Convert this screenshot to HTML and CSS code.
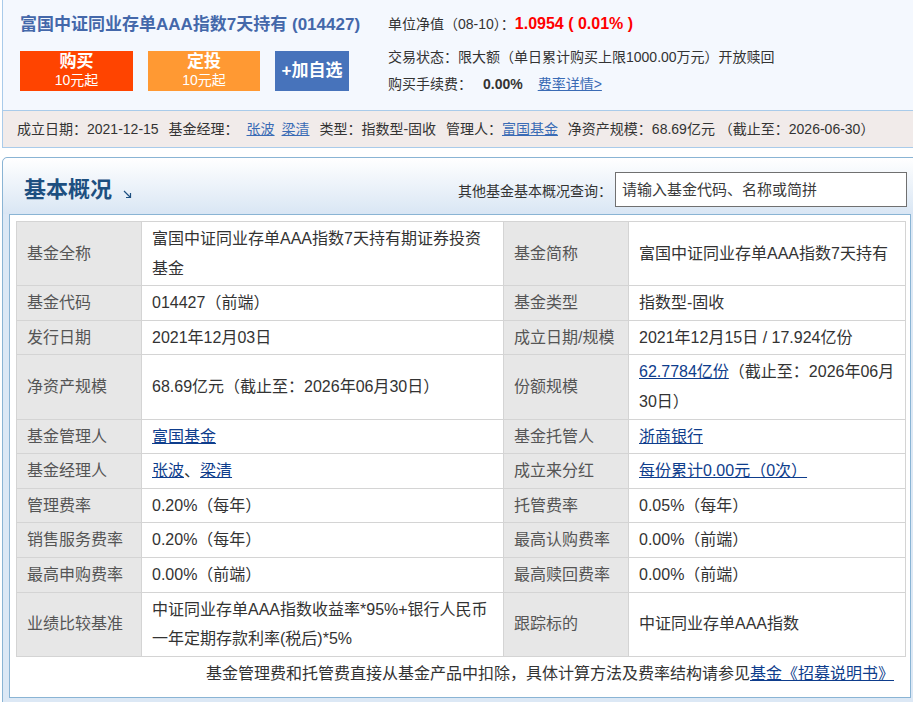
FILE: index.html
```html
<!DOCTYPE html>
<html lang="zh">
<head>
    <meta charset="UTF-8">
    <title>富国中证同业存单AAA指数7天持有 (014427) 基本概况</title>
    <link rel="stylesheet" href="styles.css">
</head>
<body>

<div class="fund-head">
    <div class="head-main">
        <div class="head-left">
            <div class="fund-name">富国中证同业存单AAA指数7天持有 (014427)</div>
            <div class="btns">
                <a class="btn buy" href="#"><b>购买</b><span>10元起</span></a>
                <a class="btn plan" href="#"><b>定投</b><span>10元起</span></a>
                <a class="btn fav" href="#"><b>+加自选</b></a>
            </div>
        </div>
        <div class="head-right">
            <p class="nav-line">单位净值（08-10）：<strong class="up">1.0954 ( 0.01% )</strong></p>
            <p>交易状态：限大额（单日累计购买上限1000.00万元）开放赎回</p>
            <p>购买手续费：<strong class="fee">0.00%</strong><a class="fee-link" href="#">费率详情&gt;</a></p>
        </div>
    </div>
    <div class="info-bar">
        <span>成立日期：2021-12-15</span>
        <span class="mgr">基金经理：<a href="#">张波</a><a href="#">梁清</a></span>
        <span>类型：指数型-固收</span>
        <span>管理人：<a href="#">富国基金</a></span>
        <span>净资产规模：68.69亿元 （截止至：2026-06-30）</span>
    </div>
</div>

<div class="box">
    <div class="box-hd">
        <h2>基本概况<svg class="arrow" width="9" height="9" viewBox="0 0 9 9"><path d="M1 1 L7.5 7.5 M7.5 3 V7.5 H3" fill="none" stroke="#1d4f80" stroke-width="1.2"/></svg></h2>
        <div class="search">其他基金基本概况查询：<input type="text" placeholder="请输入基金代码、名称或简拼"></div>
    </div>
    <div class="box-bd">
        <table class="info">
            <colgroup>
                <col style="width:125px">
                <col style="width:362px">
                <col style="width:125px">
                <col style="width:277px">
            </colgroup>
            <tr>
                <th>基金全称</th><td>富国中证同业存单AAA指数7天持有期证券投资基金</td>
                <th>基金简称</th><td>富国中证同业存单AAA指数7天持有</td>
            </tr>
            <tr>
                <th>基金代码</th><td>014427（前端）</td>
                <th>基金类型</th><td>指数型-固收</td>
            </tr>
            <tr>
                <th>发行日期</th><td>2021年12月03日</td>
                <th>成立日期/规模</th><td>2021年12月15日 / 17.924亿份</td>
            </tr>
            <tr>
                <th>净资产规模</th><td>68.69亿元（截止至：2026年06月30日）</td>
                <th>份额规模</th><td><a href="#">62.7784亿份</a>（截止至：2026年06月30日）</td>
            </tr>
            <tr>
                <th>基金管理人</th><td><a href="#">富国基金</a></td>
                <th>基金托管人</th><td><a href="#">浙商银行</a></td>
            </tr>
            <tr>
                <th>基金经理人</th><td><a href="#">张波</a>、<a href="#">梁清</a></td>
                <th>成立来分红</th><td><a href="#">每份累计0.00元（0次）</a></td>
            </tr>
            <tr>
                <th>管理费率</th><td>0.20%（每年）</td>
                <th>托管费率</th><td>0.05%（每年）</td>
            </tr>
            <tr>
                <th>销售服务费率</th><td>0.20%（每年）</td>
                <th>最高认购费率</th><td>0.00%（前端）</td>
            </tr>
            <tr>
                <th>最高申购费率</th><td>0.00%（前端）</td>
                <th>最高赎回费率</th><td>0.00%（前端）</td>
            </tr>
            <tr>
                <th>业绩比较基准</th><td>中证同业存单AAA指数收益率*95%+银行人民币一年定期存款利率(税后)*5%</td>
                <th>跟踪标的</th><td>中证同业存单AAA指数</td>
            </tr>
        </table>
        <p class="note">基金管理费和托管费直接从基金产品中扣除，具体计算方法及费率结构请参见<a href="#">基金《招募说明书》</a></p>
    </div>
</div>

</body>
</html>
```

FILE: styles.css
```css
html, body { overflow: hidden; }
body { margin: 0; font-family: "Liberation Sans", "Noto Sans CJK SC", sans-serif; color: #333; background: #fff; }
a { color: #0e3d8c; }

.fund-head { margin-left: 2px; width: 930px; border-left: 1px solid #a9cbea; border-bottom: 1px solid #a9cbea; }
.head-main { display: flex; height: 111px; box-sizing: border-box; background: #f4f8fe; border-bottom: 1px solid #a9cbea; }
.head-left { flex: none; width: 385px; padding: 15px 0 0 17px; box-sizing: border-box; }
.fund-name { font-size: 17px; line-height: 20px; font-weight: bold; color: #4468aa; white-space: nowrap; }
.btns { display: flex; gap: 15px; margin-top: 16px; }
.btn { display: flex; flex-direction: column; align-items: center; justify-content: center; height: 40px; color: #fff; text-decoration: none; }
.btn b { font-size: 17px; line-height: 18px; }
.btn span { font-size: 14px; line-height: 18px; }
.buy { width: 113px; background: #ff4400; }
.plan { width: 112px; background: #ff9933; }
.fav { width: 74px; background: #4773bb; }

.head-right { padding-top: 14px; font-size: 14px; }
.head-right p { margin: 0; line-height: 27px; white-space: nowrap; }
.head-right .nav-line { line-height: 20px; margin-bottom: 10px; }
.up { color: #ff0000; font-size: 16px; }
.fee { margin-left: 11px; }
.fee-link { margin-left: 15px; color: #3a6bb5; }

.info-bar { height: 36px; line-height: 36px; padding-left: 14px; background: #f1ebea; font-size: 14px; white-space: nowrap; }
.info-bar span { margin-right: 6px; }
.info-bar a { color: #3a6bb5; }
.info-bar .mgr a { margin-left: 7px; }
.info-bar .mgr a:first-child { margin-left: 8px; }

.box { margin: 9px 0 0 2px; width: 916px; box-sizing: border-box; border: 1px solid #8ab4d4; border-radius: 5px 5px 0 0; background: #dce8f5; padding: 0 6px 10px 6px; }
.box-hd { display: flex; justify-content: space-between; align-items: center; margin: 0 -6px; padding: 14px 10px 7px 21px; background: linear-gradient(#fff, #d9e6f4); border-radius: 5px 5px 0 0; }
.box-hd h2 { margin: 0; font-size: 22px; line-height: 26px; color: #1d4f80; }
.arrow { margin-left: 11px; vertical-align: -2px; }
.search { display: flex; align-items: center; font-size: 14px; }
.search input { width: 292px; height: 35px; box-sizing: border-box; margin: 0 0 0 3px; padding: 0 6px; border: 1px solid #707070; font-family: inherit; font-size: 15px; color: #333; background: #fff; outline: none; }
.search input::placeholder { color: #3a3a3a; }

.box-bd { background: #fff; border: 1px solid #8ab4d4; padding: 6px 5px 0 6px; }
table.info { border-collapse: collapse; width: 889px; table-layout: fixed; font-size: 16px; line-height: 29.6px; }
.info th, .info td { border: 1px solid #d4d4d4; padding: 2px 10px; text-align: left; vertical-align: middle; }
.info th { background: #e7e7e7; font-weight: normal; color: #555; }
.info td { color: #333; }
.info td:last-child { padding-right: 6px; }
.note { margin: 0; padding: 2px 11px 8px 0; text-align: right; font-size: 16px; line-height: 30px; }
```
